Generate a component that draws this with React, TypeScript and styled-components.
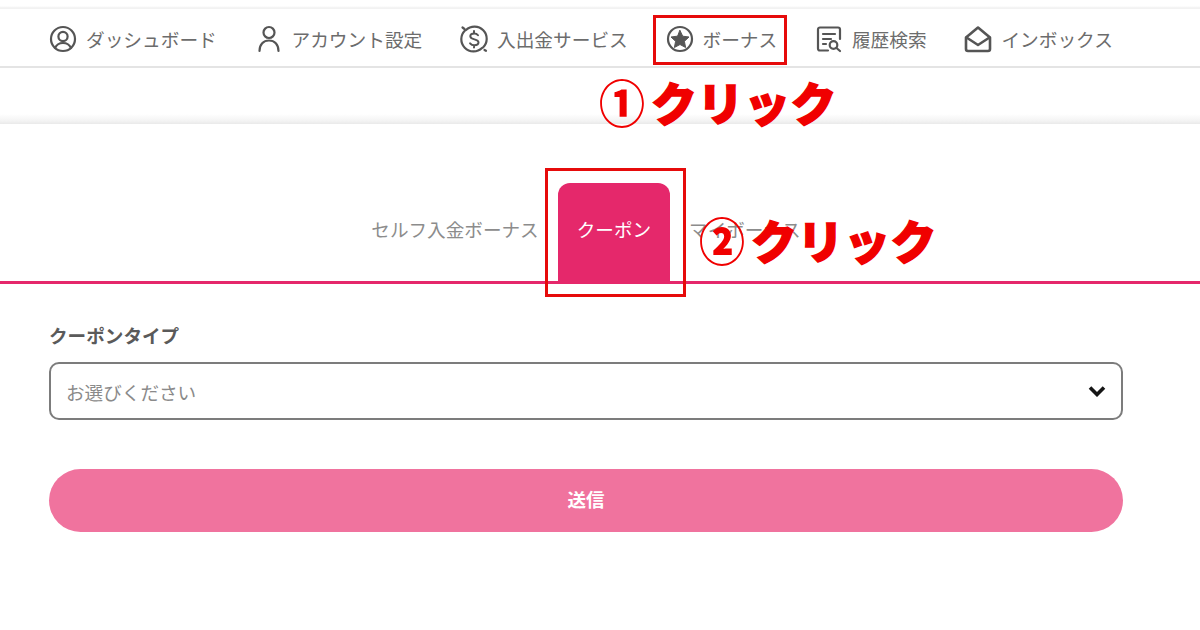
import React from "react";
import styled, { createGlobalStyle } from "styled-components";

const Global = createGlobalStyle`
  html, body { margin: 0; padding: 0; background: #fff; }
  body { font-family: "Noto Sans CJK JP", "Noto Sans", sans-serif; }
`;
const Page = styled.div`
  position: relative;
  width: 1200px;
  height: 630px;
  overflow: hidden;
  background: #fff;
`;
const TopEdge = styled.div`
  height: 9px;
  background: linear-gradient(#fff 0, #fff 6px, #f0f0f0 8px, #f4f4f4 9px);
`;
const Nav = styled.nav`
  height: 59px;
  box-sizing: border-box;
  display: flex;
  align-items: center;
  gap: 37.7px;
  padding: 2px 0 0 49px;
  border-bottom: 2px solid #e4e4e4;
`;
const NavItem = styled.a`
  display: flex;
  align-items: center;
  gap: 9px;
  font-size: 18.7px;
  line-height: 28px;
  color: #6c6c6c;
  white-space: nowrap;
`;
const NavIcon = styled.svg`
  width: 28px;
  height: 28px;
  flex: none;
  fill: none;
  stroke: #555;
  stroke-width: 2.2;
  stroke-linecap: round;
  stroke-linejoin: round;
`;
const Band = styled.div`
  height: 56px;
  background: linear-gradient(#fff 0, #fff 46px, #f3f3f3 53px, #e9e9e9 56px);
`;
const Tabs = styled.div`
  display: flex;
  justify-content: center;
  height: 160px;
  padding: 0 77px 0 49px;
  box-sizing: border-box;
  border-bottom: 3px solid #e5286b;
`;
const TabList = styled.div`
  display: flex;
  align-self: flex-end;
  height: 98px;
`;
const Tab = styled.div<{ $active?: boolean }>`
  height: 98px;
  box-sizing: border-box;
  padding: 26px 19px 0;
  font-size: 18.6px;
  line-height: 40px;
  white-space: nowrap;
  border-radius: 12px 12px 0 0;
  color: ${(p) => (p.$active ? "#fff" : "#8c8c8c")};
  background: ${(p) => (p.$active ? "#e5286b" : "transparent")};
`;
const Form = styled.form`
  padding: 37px 77px 0 49px;
`;
const Label = styled.div`
  font-size: 18.6px;
  font-weight: 700;
  line-height: 28px;
  color: #5a5a5a;
  margin-bottom: 13px;
`;
const Select = styled.div`
  height: 58px;
  box-sizing: border-box;
  border: 2px solid #7c7c7c;
  border-radius: 10px;
  display: flex;
  align-items: center;
  justify-content: space-between;
  padding: 0 15px;
  font-size: 18.6px;
  color: #8a8a8a;
`;
const Chevron = styled.svg`
  width: 18px;
  height: 12px;
  fill: none;
  stroke: #151515;
  stroke-width: 3.6;
`;
const Submit = styled.button`
  display: block;
  width: 100%;
  height: 63px;
  margin-top: 49px;
  padding: 0 0 3px;
  border: 0;
  border-radius: 32px;
  background: #f0739e;
  color: #fff;
  font-family: inherit;
  font-size: 18.5px;
  font-weight: 700;
`;
const RedBox = styled.div<{ $x: number; $y: number; $w: number; $h: number }>`
  position: absolute;
  left: ${(p) => p.$x}px;
  top: ${(p) => p.$y}px;
  width: ${(p) => p.$w}px;
  height: ${(p) => p.$h}px;
  box-sizing: border-box;
  border: 3px solid #e60b0b;
`;
const Callout = styled.div<{ $x: number; $y: number }>`
  position: absolute;
  left: ${(p) => p.$x}px;
  top: ${(p) => p.$y}px;
  display: flex;
  align-items: center;
  color: #f00000;
  font-weight: 900;
  line-height: 48px;
  white-space: nowrap;
`;
const Num = styled.span`
  display: inline-block;
  font-size: 46px;
  font-weight: 900;
  margin-right: 6px;
  transform: scaleY(1.1);
`;
const Word = styled.span`
  font-size: 46px;
  letter-spacing: 0.5px;
  -webkit-text-stroke: 1.5px #f00000;
`;

export default function App() {
  return (
    <Page>
      <Global />
      <TopEdge />
      <Nav>
        <NavItem>
          <NavIcon viewBox="0 0 28 28">
            <circle cx="14" cy="14" r="12" />
            <circle cx="14" cy="11.500" r="4.600" />
            <path d="M6 23c1.500-3.400 4.600-5 8-5s6.500 1.600 8 5" />
          </NavIcon>
          ダッシュボード
        </NavItem>
        <NavItem>
          <NavIcon viewBox="0 0 28 28">
            <circle cx="14" cy="7.500" r="5.500" />
            <path d="M4.500 26c0-6.500 4-10.500 9.500-10.500S23.500 19.500 23.500 26" />
          </NavIcon>
          アカウント設定
        </NavItem>
        <NavItem>
          <NavIcon viewBox="0 0 28 28">
            <path d="M6 5A11.500 11.500 0 0 1 23 22.500" />
            <path d="M22 23A11.500 11.500 0 0 1 5 5.500" />
            <path d="M2.500 2.500l2 1.500M24.500 25l1.500 .8" />
            <path d="M18 10.300c-.9-1.300-2.200-1.900-3.900-1.900-2.200 0-3.800 1.100-3.800 2.900 0 4 8.200 2.100 8.200 6 0 1.800-1.800 2.900-4.100 2.900-1.800 0-3.300-.6-4.300-1.900M14 6v2.400M14 20.200v2.300" strokeWidth="2" />
          </NavIcon>
          入出金サービス
        </NavItem>
        <NavItem>
          <NavIcon viewBox="0 0 28 28">
            <circle cx="14" cy="14" r="12" />
            <path d="M14 5.500l2.700 5.700 6.300.8-4.600 4.300 1.200 6.200-5.600-3-5.600 3 1.200-6.200L5 12l6.300-.8z" fill="#555" strokeWidth="1" />
          </NavIcon>
          ボーナス
        </NavItem>
        <NavItem>
          <NavIcon viewBox="0 0 28 28">
            <path d="M13 25.500H5a2 2 0 0 1-2-2V4.500a2 2 0 0 1 2-2h18a2 2 0 0 1 2 2V14" />
            <path d="M8 9h12M8 14h8M8 19h3" />
            <circle cx="18.500" cy="20" r="3.800" />
            <path d="M21.500 23l3.500 3" />
          </NavIcon>
          履歴検索
        </NavItem>
        <NavItem>
          <NavIcon viewBox="0 0 28 28">
            <path d="M2 12.500L14 2.500l12 10V24a2 2 0 0 1-2 2H4a2 2 0 0 1-2-2z" strokeWidth="2.600" />
            <path d="M2.500 12.500L14 20l11.500-7.500" strokeWidth="2.600" />
          </NavIcon>
          インボックス
        </NavItem>
      </Nav>
      <Band />
      <Tabs>
        <TabList>
          <Tab>セルフ入金ボーナス</Tab>
          <Tab $active>クーポン</Tab>
          <Tab>マイボーナス</Tab>
        </TabList>
      </Tabs>
      <Form>
        <Label>クーポンタイプ</Label>
        <Select>
          お選びください
          <Chevron viewBox="0 0 18 12">
            <path d="M2 2.500l7 7 7-7" />
          </Chevron>
        </Select>
        <Submit type="button">送信</Submit>
      </Form>
      <RedBox $x={653} $y={15} $w={134} $h={50} />
      <RedBox $x={545} $y={168} $w={141} $h={129} />
      <Callout $x={599} $y={77}>
        <Num>①</Num>
        <Word>クリック</Word>
      </Callout>
      <Callout $x={699} $y={215}>
        <Num>②</Num>
        <Word>クリック</Word>
      </Callout>
    </Page>
  );
}
